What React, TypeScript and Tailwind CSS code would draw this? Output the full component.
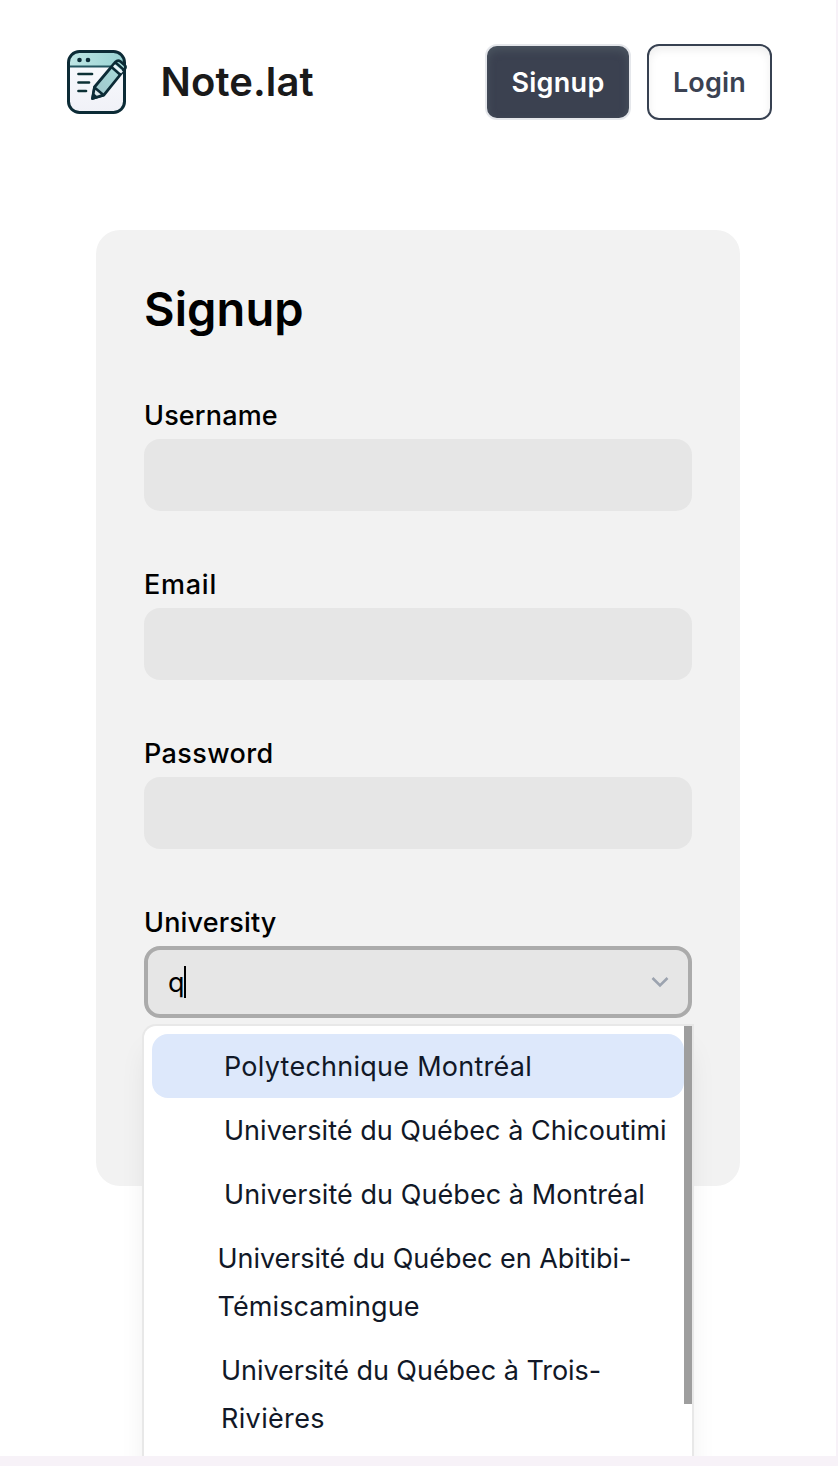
import React from "react";

const fields = [
  { label: "Username", type: "text", spacing: "tracking-[0.15px]" },
  { label: "Email", type: "email", spacing: "tracking-[0.75px]" },
  { label: "Password", type: "password", spacing: "tracking-[0.4px]" },
];

const options = [
  { lines: ["Polytechnique Montréal"], indent: "pl-[72px]", spacing: "tracking-[0.26px]", active: true },
  { lines: ["Université du Québec à Chicoutimi"], indent: "pl-[72px]", spacing: "tracking-[0.03px]" },
  { lines: ["Université du Québec à Montréal"], indent: "pl-[72px]", spacing: "tracking-[0.06px]" },
  { lines: ["Université du Québec en Abitibi-", "Témiscamingue"], indent: "pl-[65.5px]", spacing: "tracking-[-0.05px]", rest: "tracking-[0.1px]" },
  { lines: ["Université du Québec à Trois-", "Rivières"], indent: "pl-[69px]", spacing: "tracking-[-0.04px]", rest: "tracking-[0.35px]" },
];

function Logo() {
  return (
    <svg className="h-[66px] w-[62px] shrink-0" viewBox="0 0 62 66" fill="none">
      <defs>
        <linearGradient id="paper" x1="0" y1="0" x2="0" y2="1">
          <stop offset="0" stopColor="#fafcff" />
          <stop offset="1" stopColor="#f0f1f7" />
        </linearGradient>
        <linearGradient id="bar" x1="0" y1="0" x2="1" y2="0">
          <stop offset="0" stopColor="#bfe6e5" />
          <stop offset="1" stopColor="#97d2d2" />
        </linearGradient>
        <linearGradient id="pencil" x1="0" y1="1" x2="1" y2="0">
          <stop offset="0" stopColor="#9fc4ca" />
          <stop offset="1" stopColor="#a9e0dd" />
        </linearGradient>
      </defs>
      <rect x="2.5" y="2.5" width="56" height="61" rx="11" fill="url(#paper)" />
      <path d="M2.5 17.5v-4a11 11 0 0 1 11-11h34a11 11 0 0 1 11 11v4z" fill="url(#bar)" />
      <path d="M3 17.5h42" stroke="#245660" strokeWidth="1.800" />
      <rect x="2.5" y="2.5" width="56" height="61" rx="11" stroke="#0c2b36" strokeWidth="3" />
      <circle cx="13.500" cy="11" r="2.300" fill="#0c2b36" />
      <circle cx="22" cy="11" r="2.300" fill="#0c2b36" />
      <path d="M12.500 25h13.500M12.500 33.500h10.500M12.500 42h7.500" stroke="#0c3035" strokeWidth="2.700" strokeLinecap="round" />
      <path d="M26.500 49.500L28.500 38L49.500 13Q51.800 10.500 54.500 12.500L58.500 16Q60.500 18 58.500 20.500L37.800 46.200Z" fill="url(#pencil)" stroke="#0c2b36" strokeWidth="2.800" strokeLinejoin="round" />
      <path d="M28.500 38.500l9 7.500-11 3.500z" fill="#dce8ec" stroke="#0c2b36" strokeWidth="2.500" strokeLinejoin="round" />
      <path d="M26.300 50l1.200-6 4 3.500z" fill="#0c2b36" />
      <path d="M48 16.500l8 7" stroke="#edf5fa" strokeWidth="2.800" />
      <path d="M49.500 13.500l8.500 7.500M45.500 18l9 8" stroke="#0c2b36" strokeWidth="2.400" />
    </svg>
  );
}

export default function App() {
  return (
    <div className="h-[1466px] w-[838px] overflow-hidden bg-[#f7f2f8] font-['Inter','Liberation_Sans',sans-serif]">
      <div className="h-[1456px] w-[836px] overflow-hidden bg-white">
        <header className="flex items-center pt-11 pr-16 pl-[66px]">
          <Logo />
          <span className="ml-[32.5px] text-[40px] leading-[76px] font-semibold tracking-[0.1px] text-[#1a1a1a]">Note.lat</span>
          <div className="ml-auto flex gap-4">
            <button className="h-[76px] w-[146px] rounded-xl border-2 border-[#e5e7eb] bg-[#3b4150] pt-0.5 text-[27px] font-semibold tracking-[0.3px] text-white shadow-[inset_0_4px_8px_0_#4b5560]">Signup</button>
            <button className="h-[76px] w-[125px] rounded-xl border-2 border-[#374151] bg-white pt-0.5 text-[27px] font-semibold tracking-[0.2px] text-[#3b4252] shadow-[inset_0_4px_8px_0_#00000012]">Login</button>
          </div>
        </header>
        <main className="mt-[110px] ml-24 h-[956px] w-[644px] rounded-3xl bg-[#f2f2f2] px-12 pt-[47px] text-black">
          <h1 className="text-[47px] leading-[64px] font-semibold tracking-[0.1px]">Signup</h1>
          <form className="mt-[50px] flex flex-col gap-[49px]">
            {fields.map((f) => (
              <label key={f.label} className="flex flex-col">
                <span className={`h-12 text-[27px] leading-[50px] font-medium ${f.spacing}`}>{f.label}</span>
                <input type={f.type} className="h-[72px] rounded-2xl bg-[#e6e6e6] outline-none" />
              </label>
            ))}
            <div className="flex flex-col">
              <span className="h-12 text-[27px] leading-[50px] font-medium tracking-[0.15px]">University</span>
              <div className="relative">
                <div className="flex h-[72px] items-center rounded-2xl border-4 border-[#ababab] bg-[#e6e6e6] pr-[12.5px] pl-5">
                  <span className="pt-0.5 text-[27px] leading-8">q</span>
                  <span className="-ml-px h-8 w-0.5 bg-black" />
                  <svg className="ml-auto h-8 w-8" viewBox="0 0 32 32" fill="none">
                    <path d="M8.500 12l7.500 7.500 7.500-7.500" stroke="#9ca3af" strokeWidth="2.600" />
                  </svg>
                </div>
                <div className="absolute top-20 left-0 flex h-[500px] w-[548px] rounded-xl rounded-tr-none bg-white shadow-[0_0_0_2px_#e8e8e8,0_20px_30px_-6px_#0000001a,0_8px_12px_-8px_#0000001a]">
                  <ul className="flex-1 py-2 pl-2 text-[27px] leading-[48px] text-[#111827]">
                    {options.map((o) => (
                      <li key={o.lines.join("")} className={`rounded-2xl pt-[9px] pb-[7px] whitespace-nowrap ${o.indent} ${o.spacing} ${o.active ? "bg-[#dde8fb]" : ""}`}>
                        {o.lines.map((line, i) => (
                          <div key={line} className={i > 0 ? o.rest : undefined}>{line}</div>
                        ))}
                      </li>
                    ))}
                  </ul>
                  <div className="h-[378px] w-2 bg-[#9e9e9e]" />
                </div>
              </div>
            </div>
          </form>
        </main>
      </div>
    </div>
  );
}
